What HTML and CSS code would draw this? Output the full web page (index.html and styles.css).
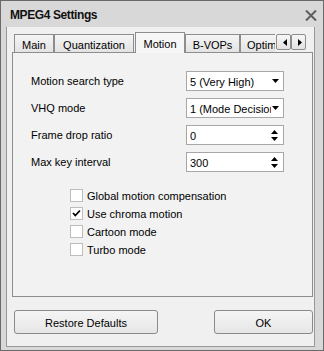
FILE: index.html
```html
<!DOCTYPE html>
<html>
<head>
<title>MPEG4 Settings</title>
<link rel="stylesheet" href="styles.css">
</head>
<body>
<div class="window">
    <div class="titlebar">
        <span class="title">MPEG4 Settings</span>
        <svg class="close" width="12" height="11" viewBox="0 0 12 11">
            <path d="M1 0.5 L11 10.5 M11 0.5 L1 10.5" stroke="#5e5e5e" stroke-width="2" fill="none"/>
        </svg>
    </div>
    <div class="client">
        <div class="tabrow">
            <div class="tabs">
                <div class="tab main">Main</div>
                <div class="tab quant">Quantization</div>
                <div class="tab motion selected">Motion</div>
                <div class="tab bvops">B-VOPs</div>
                <div class="tab optim">Optimization</div>
            </div>
            <div class="scroller">
                <div class="arrow">
                    <svg width="4" height="7" viewBox="0 0 4 7"><path d="M4 0 L0 3.5 L4 7 Z" fill="#000"/></svg>
                </div>
                <div class="arrow">
                    <svg width="4" height="7" viewBox="0 0 4 7"><path d="M0 0 L4 3.5 L0 7 Z" fill="#000"/></svg>
                </div>
            </div>
        </div>
        <div class="panel">
            <div class="fields">
                <div class="label">Motion search type</div>
                <div class="box">
                    <span class="value">5 (Very High)</span>
                    <svg class="drop" width="7" height="4" viewBox="0 0 7 4"><path d="M0 0 L7 0 L3.5 4 Z" fill="#000"/></svg>
                </div>
                <div class="label">VHQ mode</div>
                <div class="box">
                    <span class="value">1 (Mode Decision)</span>
                    <svg class="drop" width="7" height="4" viewBox="0 0 7 4"><path d="M0 0 L7 0 L3.5 4 Z" fill="#000"/></svg>
                </div>
                <div class="label">Frame drop ratio</div>
                <div class="box">
                    <span class="value">0</span>
                    <svg class="spin" width="7" height="11" viewBox="0 0 7 11"><path d="M3.5 0 L7 4 L0 4 Z M0 7 L7 7 L3.5 11 Z" fill="#000"/></svg>
                </div>
                <div class="label">Max key interval</div>
                <div class="box">
                    <span class="value">300</span>
                    <svg class="spin" width="7" height="11" viewBox="0 0 7 11"><path d="M3.5 0 L7 4 L0 4 Z M0 7 L7 7 L3.5 11 Z" fill="#000"/></svg>
                </div>
            </div>
            <div class="checks">
                <div class="check"><span class="cb"></span><span>Global motion compensation</span></div>
                <div class="check"><span class="cb"><svg width="11" height="11" viewBox="0 0 11 11"><path d="M2 5 L4.3 7.5 L9 2.5" stroke="#000" stroke-width="1.8" fill="none"/></svg></span><span>Use chroma motion</span></div>
                <div class="check"><span class="cb"></span><span>Cartoon mode</span></div>
                <div class="check"><span class="cb"></span><span>Turbo mode</span></div>
            </div>
        </div>
        <div class="buttons">
            <div class="btn restore">Restore Defaults</div>
            <div class="btn ok">OK</div>
        </div>
    </div>
</div>
</body>
</html>
```
FILE: styles.css
```css
body {
    margin: 0;
    font-family: "Liberation Sans", Arial, sans-serif;
    font-size: 11px;
    color: #000;
}

.window {
    width: 324px;
    height: 351px;
    box-sizing: border-box;
    border: 1px solid #6a6a6a;
    background: #d8d8d8;
    display: flex;
    flex-direction: column;
}

.titlebar {
    height: 26px;
    flex: none;
    box-sizing: border-box;
    display: flex;
    align-items: center;
    justify-content: space-between;
    padding: 2px 6px 0 9px;
}

.title {
    font-weight: bold;
    font-size: 12px;
    letter-spacing: -0.4px;
    color: #111;
}

.close {
    display: block;
    margin-top: 1px;
}

.client {
    flex: 1;
    margin: 0 8px 3px 5px;
    border: 1px solid #999;
    border-top: none;
    background: #f0f0f0;
    padding: 5px 1px 0 5px;
    display: flex;
    flex-direction: column;
}

/* tab strip */
.tabrow {
    height: 21px;
    display: flex;
    align-items: flex-end;
    position: relative;
    z-index: 1;
    flex: none;
}

.tabs {
    display: flex;
    align-items: flex-end;
    width: 263px;
    height: 21px;
    box-sizing: border-box;
    padding-left: 2px;
    overflow: hidden;
    flex: none;
}

.tab {
    height: 18px;
    margin-bottom: 1px;
    box-sizing: border-box;
    border: 1px solid #8d8d8d;
    border-bottom: none;
    background: linear-gradient(#f5f5f5, #e3e3e3);
    display: flex;
    align-items: center;
    justify-content: center;
    padding-top: 2px;
    flex: none;
    white-space: nowrap;
    overflow: hidden;
}

.main { width: 40px; }
.quant { width: 80px; }
.motion { width: 50px; margin-left: 1px; }
.bvops { width: 55px; }
.optim { width: 70px; justify-content: flex-start; padding-left: 6px; }

.tab.selected {
    height: 21px;
    margin-bottom: 0;
    padding-top: 1px;
    background: #f6f6f6;
}

.scroller {
    display: flex;
    align-self: flex-start;
    margin-top: 2px;
    margin-left: 1px;
}

.arrow {
    width: 15px;
    height: 16px;
    box-sizing: border-box;
    border: 1px solid #8d8d8d;
    border-radius: 2px;
    background: linear-gradient(#f7f7f7, #e2e2e2);
    display: flex;
    align-items: center;
    justify-content: center;
    padding-left: 2px;
}

.arrow svg {
    display: block;
}

/* page */
.panel {
    margin-top: -1px;
    height: 245px;
    box-sizing: border-box;
    border: 1px solid #8d8d8d;
    background: #f2f2f2;
    padding: 18px 0 0 18px;
}

.fields {
    display: grid;
    grid-template-columns: 155px 98px;
    row-gap: 7px;
    align-items: center;
}

.box {
    height: 20px;
    box-sizing: border-box;
    border: 1px solid #a7a7a7;
    background: #fff;
    display: flex;
    align-items: center;
    padding: 0 4px 0 3px;
}

.value {
    flex: 1;
    white-space: nowrap;
    overflow: hidden;
    margin-top: 1px;
}

.drop {
    display: block;
    margin-left: 1px;
}

.spin {
    display: block;
    margin-right: 1px;
}

.checks {
    margin: 17px 0 0 39px;
    display: flex;
    flex-direction: column;
    gap: 5px;
}

.check {
    height: 13px;
    display: flex;
    align-items: center;
    gap: 4px;
    line-height: 13px;
}

.cb {
    width: 13px;
    height: 13px;
    box-sizing: border-box;
    border: 1px solid #bdbdbd;
    background: #fff;
    flex: none;
    display: flex;
    align-items: center;
    justify-content: center;
}

.cb svg {
    display: block;
}

.check span:last-child {
    margin-top: 2px;
}

/* buttons */
.buttons {
    margin-top: 13px;
    display: flex;
    justify-content: space-between;
    padding-left: 2px;
}

.btn {
    height: 24px;
    box-sizing: border-box;
    border: 1px solid #8a8a8a;
    border-radius: 3px;
    background: linear-gradient(#f5f5f5, #e6e6e6);
    display: flex;
    align-items: center;
    justify-content: center;
    padding-top: 1px;
}

.restore { width: 144px; }
.ok { width: 99px; }
```
